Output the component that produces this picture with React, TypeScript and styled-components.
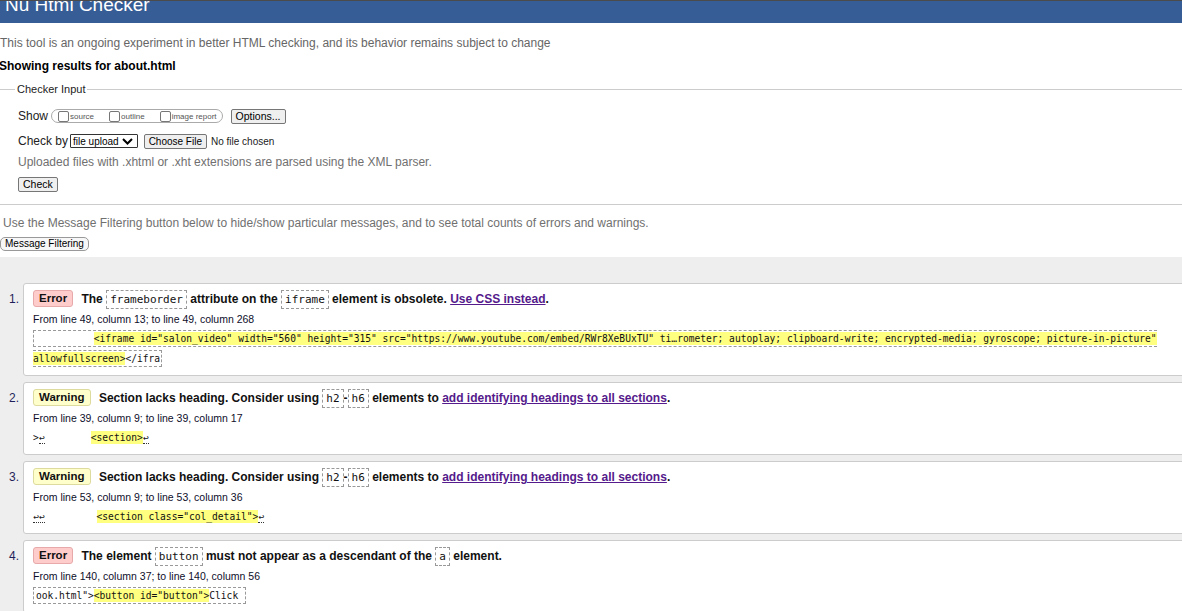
import styled, { createGlobalStyle, css } from "styled-components";

const GlobalStyle = createGlobalStyle`
  html, body {
    margin: 0;
    padding: 0;
    background: #fff;
    overflow: hidden;
  }
  body {
    font-family: "Liberation Sans", Arial, sans-serif;
    font-size: 12px;
    color: #111;
  }
`;

const SANS = `"Liberation Sans", Arial, sans-serif`;
const MONO = `"DejaVu Sans Mono", "Liberation Mono", monospace`;

const Header = styled.header`
  height: 23px;
  box-sizing: border-box;
  border-top: 1px solid #4b4b4b;
  background: #365d95;
  overflow: hidden;
`;

const Title = styled.h1`
  margin: -6px 0 0 5px;
  font: normal 19px/19px ${SANS};
  color: #fff;
`;

const Intro = styled.p`
  margin: 10px 0 0;
  line-height: 20px;
  color: #666;
`;

const Showing = styled.p`
  margin: 3px 0 0 -1px;
  line-height: 20px;
  font-weight: bold;
  color: #000;
`;

const Fieldset = styled.fieldset`
  margin: 7px 0 0;
  padding: 0 0 10px 18px;
  min-width: 0;
  border: 0;
  border-top: 1px solid #ccc;
  border-bottom: 1px solid #ccc;
`;

const Legend = styled.legend`
  margin-left: -3px;
  padding: 0 2px;
  font-size: 11px;
  line-height: 13px;
  color: #222;
`;

const Row = styled.div<{ $mt?: number }>`
  display: flex;
  align-items: center;
  height: 20px;
  margin-top: ${(p) => p.$mt ?? 0}px;
  color: #222;
`;

const Hint = styled.p`
  margin: 0;
  line-height: 22px;
  color: #707070;
`;

const Pill = styled.span`
  display: inline-flex;
  align-items: center;
  height: 14px;
  box-sizing: border-box;
  margin-left: 3px;
  padding: 0 5px 0 6px;
  border: 1px solid #aaa;
  border-radius: 7px;
`;

const CheckItem = styled.label`
  display: inline-flex;
  align-items: center;
  font-size: 8px;
  color: #555;
  & + & {
    margin-left: 15px;
  }
`;

const CheckBox = styled.span`
  width: 11px;
  height: 11px;
  box-sizing: border-box;
  margin-right: 1px;
  border: 1px solid #767676;
  border-radius: 2px;
  background: #fff;
`;

const Button = styled.button<{ $ml?: number; $size?: number }>`
  height: 15px;
  box-sizing: border-box;
  margin: 0 0 0 ${(p) => p.$ml ?? 0}px;
  padding: 0 4px;
  border: 1px solid #767676;
  border-radius: 2px;
  background: #efefef;
  color: #000;
  font: ${(p) => p.$size ?? 10.5}px/13px ${SANS};
`;

const SelectBox = styled.span`
  display: inline-flex;
  align-items: center;
  height: 14px;
  box-sizing: border-box;
  margin-left: 2px;
  padding: 0 4px 0 2px;
  border: 1px solid #333;
  border-radius: 1px;
  font-size: 10px;
  color: #000;
  svg {
    margin-left: 3px;
  }
`;

const NoFile = styled.span`
  margin-left: 4px;
  font-size: 10px;
  color: #222;
`;

const FilterText = styled.p`
  margin: 8px 0 0 3px;
  line-height: 20px;
  color: #707070;
`;

const FilterButton = styled.button`
  display: block;
  height: 14px;
  box-sizing: border-box;
  margin: 4px 0 0;
  padding: 0 4px;
  border: 1px solid #999;
  border-radius: 5px;
  background: #f7f7f7;
  color: #000;
  font: 10px/12px ${SANS};
`;

const Results = styled.div`
  margin-top: 6px;
  padding-top: 26px;
  min-height: 400px;
  background: #eee;
`;

const List = styled.ol`
  list-style: none;
  margin: 0;
  padding: 0;
`;

const Item = styled.li`
  display: flex;
  align-items: flex-start;
  margin-bottom: 6px;
`;

const Num = styled.span`
  flex: none;
  width: 23px;
  box-sizing: border-box;
  margin-top: 6px;
  padding-right: 4px;
  text-align: right;
  line-height: 20px;
  color: #1f1f5a;
`;

const Card = styled.div`
  flex: none;
  width: 1180px;
  box-sizing: border-box;
  padding: 5px 9px 6px;
  border: 1px solid #ccc;
  border-radius: 3px;
  background: #fff;
`;

const Message = styled.p`
  margin: 0;
  line-height: 20px;
  font-weight: bold;
  color: #111;
  white-space: nowrap;
`;

const Badge = styled.span<{ $kind: "error" | "warning" }>`
  display: inline-block;
  margin-right: 5px;
  padding: 0 5px;
  border: 1px solid;
  border-radius: 3px;
  font-size: 11.5px;
  line-height: 15px;
  vertical-align: 1px;
  color: #111;
  ${(p) =>
    p.$kind === "error"
      ? css`
          background: #fcc;
          border-color: #e7a9a9;
        `
      : css`
          background: #ffc;
          border-color: #dedb9e;
        `}
`;

const Code = styled.code`
  padding: 2px 3px;
  border: 1px dashed #999;
  font: normal 11px ${MONO};
  color: #111;
`;

const Link = styled.a`
  color: #551a8b;
  text-decoration: underline;
`;

const Location = styled.p`
  margin: 0;
  line-height: 20px;
  font-size: 10.5px;
  color: #0e0e2a;
`;

const Extract = styled.p`
  margin: 0;
  line-height: 20px;
  font: 9.6px/20px ${MONO};
  white-space: pre;
  color: #111;
`;

const ExtractBox = styled.span`
  padding: 2px 1px 2px 2px;
  border: 1px dashed #999;
`;

const Mark = styled.mark`
  padding: 1px 0;
  background: #ffff80;
  color: inherit;
`;

const Ret = styled.span`
  border-bottom: 1px dotted #333;
`;

const Chevron = () => (
  <svg width="11" height="7" viewBox="0 0 11 7">
    <path d="M1 1 L5.5 5.5 L10 1" stroke="#000" strokeWidth="2" fill="none" />
  </svg>
);

export default function App() {
  return (
    <>
      <GlobalStyle />
      <Header>
        <Title>Nu Html Checker</Title>
      </Header>
      <Intro>
        This tool is an ongoing experiment in better HTML checking, and its
        behavior remains subject to change
      </Intro>
      <Showing>Showing results for about.html</Showing>

      <Fieldset>
        <Legend>Checker Input</Legend>
        <Row $mt={10}>
          Show
          <Pill>
            <CheckItem>
              <CheckBox />
              source
            </CheckItem>
            <CheckItem>
              <CheckBox />
              outline
            </CheckItem>
            <CheckItem>
              <CheckBox />
              image report
            </CheckItem>
          </Pill>
          <Button $ml={8}>Options...</Button>
        </Row>
        <Row $mt={5}>
          Check by
          <SelectBox>
            file upload
            <Chevron />
          </SelectBox>
          <Button $ml={6} $size={10}>
            Choose File
          </Button>
          <NoFile>No file chosen</NoFile>
        </Row>
        <Hint>
          Uploaded files with .xhtml or .xht extensions are parsed using the XML
          parser.
        </Hint>
        <Row $mt={1}>
          <Button>Check</Button>
        </Row>
      </Fieldset>

      <FilterText>
        Use the Message Filtering button below to hide/show particular messages,
        and to see total counts of errors and warnings.
      </FilterText>
      <FilterButton>Message Filtering</FilterButton>

      <Results>
        <List>
          <Item>
            <Num>1.</Num>
            <Card>
              <Message>
                <Badge $kind="error">Error</Badge> The <Code>frameborder</Code>{" "}
                attribute on the <Code>iframe</Code> element is obsolete.{" "}
                <Link href="#">Use CSS instead</Link>.
              </Message>
              <Location>From line 49, column 13; to line 49, column 268</Location>
              <Extract>
                <ExtractBox>
                  {"          "}
                  <Mark>
                    {
                      '<iframe id="salon_video" width="560" height="315" src="https://www.youtube.com/embed/RWr8XeBUxTU" ti…rometer; autoplay; clipboard-write; encrypted-media; gyroscope; picture-in-picture"\nallowfullscreen>'
                    }
                  </Mark>
                  {"</ifra"}
                </ExtractBox>
              </Extract>
            </Card>
          </Item>

          <Item>
            <Num>2.</Num>
            <Card>
              <Message>
                <Badge $kind="warning">Warning</Badge> Section lacks heading.
                Consider using <Code>h2</Code>-<Code>h6</Code> elements to{" "}
                <Link href="#">add identifying headings to all sections</Link>.
              </Message>
              <Location>From line 39, column 9; to line 39, column 17</Location>
              <Extract>
                {">"}
                <Ret>↩</Ret>
                {"        "}
                <Mark>{"<section>"}</Mark>
                <Ret>↩</Ret>
              </Extract>
            </Card>
          </Item>

          <Item>
            <Num>3.</Num>
            <Card>
              <Message>
                <Badge $kind="warning">Warning</Badge> Section lacks heading.
                Consider using <Code>h2</Code>-<Code>h6</Code> elements to{" "}
                <Link href="#">add identifying headings to all sections</Link>.
              </Message>
              <Location>From line 53, column 9; to line 53, column 36</Location>
              <Extract>
                <Ret>↩↩</Ret>
                {"         "}
                <Mark>{'<section class="col_detail">'}</Mark>
                <Ret>↩</Ret>
              </Extract>
            </Card>
          </Item>

          <Item>
            <Num>4.</Num>
            <Card>
              <Message>
                <Badge $kind="error">Error</Badge> The element{" "}
                <Code>button</Code> must not appear as a descendant of the{" "}
                <Code>a</Code> element.
              </Message>
              <Location>From line 140, column 37; to line 140, column 56</Location>
              <Extract>
                <ExtractBox>
                  {'ook.html">'}
                  <Mark>{'<button id="button">'}</Mark>
                  {"Click "}
                </ExtractBox>
              </Extract>
            </Card>
          </Item>
        </List>
      </Results>
    </>
  );
}
